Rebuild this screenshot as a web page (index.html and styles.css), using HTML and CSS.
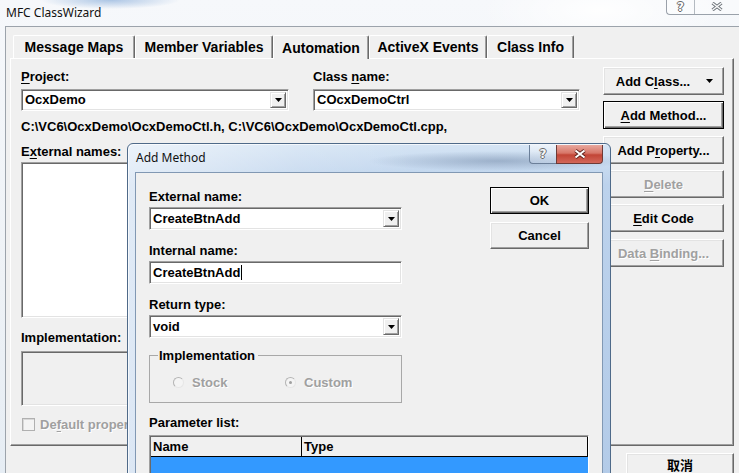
FILE: index.html
```html
<!DOCTYPE html>
<html>
<head>
<meta charset="utf-8">
<title>MFC ClassWizard</title>
<link rel="stylesheet" href="styles.css">
</head>
<body>
<div class="window">
  <div class="titlebar">
    <span class="wtitle">MFC ClassWizard</span>
    <div class="caps">
      <span class="cap help">?</span>
      <span class="cap close">
        <svg width="12" height="9" viewBox="0 0 12 9"><path d="M1.5 1L10.5 8M10.5 1L1.5 8" stroke="#6d737a" stroke-width="3.2" fill="none"/><path d="M1.5 1L10.5 8M10.5 1L1.5 8" stroke="#fafafa" stroke-width="1.4" fill="none"/></svg>
      </span>
    </div>
  </div>

  <div class="client">
    <div class="tabs">
      <div class="tab">Message Maps</div>
      <div class="tab">Member Variables</div>
      <div class="tab sel">Automation</div>
      <div class="tab">ActiveX Events</div>
      <div class="tab">Class Info</div>
    </div>

    <div class="panel">
      <div class="main-left">
        <div class="pair">
          <div class="col proj">
            <div class="lbl"><u>P</u>roject:</div>
            <div class="combo mcombo"><span class="val">OcxDemo</span><span class="drop"><svg width="7" height="4" viewBox="0 0 7 4"><path d="M0 0H7L3.5 4Z"/></svg></span></div>
          </div>
          <div class="col cls">
            <div class="lbl">Class <u>n</u>ame:</div>
            <div class="combo mcombo"><span class="val">COcxDemoCtrl</span><span class="drop"><svg width="7" height="4" viewBox="0 0 7 4"><path d="M0 0H7L3.5 4Z"/></svg></span></div>
          </div>
        </div>
        <div class="lbl path">C:\VC6\OcxDemo\OcxDemoCtl.h, C:\VC6\OcxDemo\OcxDemoCtl.cpp,</div>
        <div class="lbl ext">E<u>x</u>ternal names:</div>
        <div class="listbox"></div>
        <div class="lbl impl">Implementation:</div>
        <div class="implbox"></div>
        <div class="check"><span class="cbox"></span><span class="dtext">De<u>f</u>ault property</span></div>
      </div>

      <div class="rbtns">
        <div class="btn addclass"><span>Add C<u>l</u>ass...</span><svg width="7" height="4" viewBox="0 0 7 4"><path d="M0 0H7L3.5 4Z"/></svg></div>
        <div class="btn def"><span><u>A</u>dd Method...</span></div>
        <div class="btn b3"><span>Add P<u>r</u>operty...</span></div>
        <div class="btn dis"><span><u>D</u>elete</span></div>
        <div class="btn"><span><u>E</u>dit Code</span></div>
        <div class="btn dis b6"><span>Data <u>B</u>inding...</span></div>
      </div>
    </div>

    <div class="bottom">
      <div class="btn cjk">取消</div>
    </div>
  </div>

  <div class="dialog">
    <div class="dlg-title">
      <span class="dtitle">Add Method</span>
      <div class="dcaps">
        <span class="dcap dhelp">?</span>
        <span class="dcap dclose">
          <svg width="14" height="10" viewBox="0 0 14 10"><path d="M2.5 1.5L11.5 8.5M11.5 1.5L2.5 8.5" stroke="#5a1d18" stroke-width="3.6" fill="none"/><path d="M2.5 1.5L11.5 8.5M11.5 1.5L2.5 8.5" stroke="#ffffff" stroke-width="2" fill="none"/></svg>
        </span>
      </div>
    </div>
    <div class="dlg-client">
      <div class="dlg-top">
        <div class="dform">
          <div class="fgroup">
            <div class="lbl">External name:</div>
            <div class="combo dfield"><span class="val">CreateBtnAdd</span><span class="drop"><svg width="7" height="4" viewBox="0 0 7 4"><path d="M0 0H7L3.5 4Z"/></svg></span></div>
          </div>
          <div class="fgroup">
            <div class="lbl">Internal name:</div>
            <div class="combo dfield"><span class="val">CreateBtnAdd<span class="caret"></span></span></div>
          </div>
          <div class="fgroup">
            <div class="lbl">Return type:</div>
            <div class="combo dfield"><span class="val">void</span><span class="drop"><svg width="7" height="4" viewBox="0 0 7 4"><path d="M0 0H7L3.5 4Z"/></svg></span></div>
          </div>
          <div class="gbox">
            <div class="gb-head"><span class="gb-label">Implementation</span></div>
            <div class="gb-body">
              <span class="radio"><span class="rcirc"></span><span class="dtext">Stock</span></span>
              <span class="radio"><span class="rcirc on"></span><span class="dtext">Custom</span></span>
            </div>
          </div>
        </div>
        <div class="dbtns">
          <div class="btn def dbtn"><span>OK</span></div>
          <div class="btn dbtn"><span>Cancel</span></div>
        </div>
      </div>
      <div class="lbl plabel">Parameter list:</div>
      <div class="plist">
        <div class="phead">
          <span class="hc hname">Name</span>
          <span class="hc htype">Type</span>
        </div>
        <div class="psel"></div>
      </div>
    </div>
  </div>
</div>
</body>
</html>
```

FILE: styles.css
```css
* { box-sizing: border-box; }

html, body {
  margin: 0;
  width: 739px;
  height: 473px;
  overflow: hidden;
}

body {
  font-family: "Liberation Sans", Arial, sans-serif;
  font-size: 13px;
  font-weight: 700;
  color: #000;
  background: #eef2f6;
}

u { text-decoration: underline; text-underline-offset: 2px; }

/* ---------- main window ---------- */
.window {
  position: relative;
  width: 739px;
  height: 473px;
  display: flex;
  flex-direction: column;
  background-color: #eef2f6;
  background-image:
    radial-gradient(ellipse 70px 9px at 110px 0, rgba(110, 155, 210, 0.55), rgba(110, 155, 210, 0) 100%),
    radial-gradient(ellipse 120px 40px at 600px 10px, rgba(255, 255, 255, 0.9), rgba(255, 255, 255, 0) 100%),
    linear-gradient(180deg, #f6f8fb 0%, #eef2f6 60%, #e6edf4 100%);
}

.titlebar {
  flex: none;
  height: 26px;
  display: flex;
  justify-content: space-between;
  align-items: flex-start;
}

.wtitle {
  font-family: "Noto Sans", "Open Sans", sans-serif;
  font-weight: 400;
  font-size: 12px;
  line-height: 16px;
  margin: 5px 0 0 6px;
  color: #111;
}

.caps {
  display: flex;
  height: 16px;
  margin-right: -8px;
  margin-top: -1px;
  border-left: 1px solid #9aa1aa;
  border-bottom: 1px solid #9aa1aa;
  border-bottom-left-radius: 4px;
  background: rgba(255, 255, 255, 0.35);
}

.cap {
  display: flex;
  align-items: center;
  justify-content: center;
}

.help {
  width: 28px;
  border-right: 1px solid #b4bac1;
  font-family: "DejaVu Sans", sans-serif;
  font-size: 12px;
  color: #fdfdfd;
  text-shadow: 1px 0 0 #666, -1px 0 0 #666, 0 1px 0 #666, 0 -1px 0 #666;
}

.close { width: 52px; padding-right: 8px; }

.client {
  flex: 1;
  margin-left: 5px;
  border-left: 1px solid #9ca3ab;
  border-top: 1px solid #9ca3ab;
  background: #f0f0f0;
  padding: 8px 5px 0 4px;
  display: flex;
  flex-direction: column;
}

/* tabs */
.tabs {
  display: flex;
  height: 23px;
  padding-left: 3px;
}

.tab {
  height: 23px;
  display: flex;
  align-items: center;
  justify-content: center;
  font-size: 14px;
  background: #f0f0f0;
  border-top: 1px solid #fff;
  border-left: 1px solid #fff;
  border-right: 1px solid #696969;
  border-radius: 2px 2px 0 0;
  box-shadow: inset -1px 0 0 #a0a0a0;
}

.tab:nth-child(1) { width: 122px; }
.tab:nth-child(2) { width: 138px; }
.tab:nth-child(3) { width: 96px; }
.tab:nth-child(4) { width: 118px; }
.tab:nth-child(5) { width: 87px; }

.tab.sel {
  position: relative;
  z-index: 1;
  height: 24px;
  margin-bottom: -1px;
}

/* tab panel */
.panel {
  height: 388px;
  border: 1px solid;
  border-color: #fff #696969 #696969 #fff;
  box-shadow: inset -1px -1px 0 #a0a0a0;
  display: grid;
  grid-template-columns: 1fr 121px;
  column-gap: 23px;
  padding: 10px 9px 0 10px;
  align-items: start;
}

.lbl {
  line-height: 15px;
  height: 15px;
  white-space: nowrap;
}

.pair { display: flex; gap: 24px; }
.proj { width: 268px; }
.cls { flex: 1; }

.combo {
  display: flex;
  height: 22px;
  background: #fff;
  border: 1px solid;
  border-color: #a0a0a0 #fff #fff #a0a0a0;
  box-shadow: inset 1px 1px 0 #696969, inset -1px -1px 0 #e3e3e3;
  padding: 2px;
}

.mcombo { margin-top: 5px; }

.val {
  flex: 1;
  line-height: 16px;
  padding-left: 1px;
  white-space: nowrap;
  display: flex;
  align-items: center;
}

.drop {
  width: 16px;
  background: #f0f0f0;
  border: 1px solid;
  border-color: #e3e3e3 #696969 #696969 #e3e3e3;
  box-shadow: inset 1px 1px 0 #fff, inset -1px -1px 0 #a0a0a0;
  display: flex;
  align-items: center;
  justify-content: center;
}

.path { margin-top: 8px; }
.ext { margin-top: 10px; }

.listbox {
  margin-top: 3px;
  height: 156px;
  background: #fff;
  border: 1px solid;
  border-color: #a0a0a0 #fff #fff #a0a0a0;
  box-shadow: inset 1px 1px 0 #696969, inset -1px -1px 0 #e3e3e3;
}

.impl { margin-top: 12px; }

.implbox {
  margin-top: 6px;
  height: 55px;
  background: #f0f0f0;
  border: 1px solid;
  border-color: #a0a0a0 #fff #fff #a0a0a0;
  box-shadow: inset 1px 1px 0 #696969, inset -1px -1px 0 #e3e3e3;
}

.check {
  margin-top: 11px;
  height: 15px;
  display: flex;
  align-items: center;
  gap: 5px;
  padding-left: 1px;
  white-space: nowrap;
}

.cbox {
  width: 13px;
  height: 13px;
  border: 1px solid #b0b0b0;
  background: #f4f4f4;
  box-shadow: inset 1px 1px 0 #d8d8d8;
}

.dtext {
  color: #a0a0a0;
  text-shadow: 1px 1px 0 #fff;
  line-height: 15px;
}

/* buttons */
.rbtns {
  display: flex;
  flex-direction: column;
  gap: 6px;
  margin-top: -2px;
}

.rbtns .b3, .rbtns .b6 { margin-top: 1px; }

.btn {
  height: 28px;
  background: #f0f0f0;
  border: 1px solid;
  border-color: #fff #696969 #696969 #fff;
  box-shadow: inset -1px -1px 0 #a0a0a0, inset 1px 1px 0 #e3e3e3;
  display: flex;
  align-items: center;
  justify-content: center;
  white-space: nowrap;
  line-height: 15px;
}

.btn.def {
  border-color: #000;
  box-shadow: inset 1px 1px 0 #fff, inset -1px -1px 0 #696969, inset -2px -2px 0 #a0a0a0;
}

.btn.dis {
  color: #a0a0a0;
  text-shadow: 1px 1px 0 #fff;
}

.addclass { gap: 16px; padding-left: 2px; }

.bottom {
  display: flex;
  justify-content: flex-end;
  padding-top: 7px;
}

.cjk {
  width: 108px;
  align-items: flex-start;
  padding-top: 3px;
  font-family: "Noto Sans CJK SC", "Noto Sans CJK TC", sans-serif;
  font-size: 13px;
  line-height: 16px;
  font-weight: 700;
}

/* ---------- Add Method dialog ---------- */
.dialog {
  position: absolute;
  left: 127px;
  top: 143px;
  width: 484px;
  height: 340px;
  border: 1px solid #4f6a89;
  border-radius: 6px 6px 0 0;
  padding: 0 7px;
  display: flex;
  flex-direction: column;
  background-color: #c2d6ee;
  background-image:
    radial-gradient(ellipse 130px 10px at 370px 17px, rgba(70, 95, 130, 0.35), rgba(70, 95, 130, 0) 100%),
    linear-gradient(90deg, rgba(255, 255, 255, 0.55) 0%, rgba(255, 255, 255, 0.15) 35%, rgba(255, 255, 255, 0) 60%),
    linear-gradient(180deg, #d5e4f4 0%, #bcd2ec 12%, #b3cbe8 100%);
  box-shadow: inset 1px 1px 0 rgba(255, 255, 255, 0.7);
}

.dlg-title {
  flex: none;
  height: 28px;
  display: flex;
  justify-content: space-between;
  align-items: flex-start;
}

.dtitle {
  font-family: "Noto Sans", "Open Sans", sans-serif;
  font-weight: 400;
  font-size: 12px;
  line-height: 16px;
  margin: 6px 0 0 1px;
  color: #111;
}

.dcaps {
  display: flex;
  height: 19px;
  margin-top: 1px;
}

.dcap {
  display: flex;
  align-items: center;
  justify-content: center;
}

.dhelp {
  width: 27px;
  border: 1px solid #6b7f99;
  border-right: none;
  border-top: none;
  border-bottom-left-radius: 4px;
  background: linear-gradient(180deg, rgba(255, 255, 255, 0.55), rgba(200, 215, 235, 0.5));
  font-family: "DejaVu Sans", sans-serif;
  font-size: 12px;
  color: #f6f6f6;
  text-shadow: 1px 0 0 #6a6a6a, -1px 0 0 #6a6a6a, 0 1px 0 #6a6a6a, 0 -1px 0 #6a6a6a;
}

.dclose {
  width: 47px;
  border: 1px solid #6e3a36;
  border-top: none;
  border-bottom-right-radius: 4px;
  background: linear-gradient(180deg, #e8a89e 0%, #d77668 45%, #c24536 55%, #d3675a 100%);
}

.dlg-client {
  flex: 1;
  background: #f0f0f0;
  border: 1px solid #8198b3;
  padding: 14px 13px 0;
}

.dlg-top {
  display: flex;
  justify-content: space-between;
}

.dform {
  width: 253px;
  margin-top: 2px;
}

.fgroup + .fgroup { margin-top: 13px; }

.fgroup .lbl { margin-bottom: 3px; }

.dfield { height: 23px; }

.caret {
  display: inline-block;
  width: 1px;
  height: 15px;
  background: #000;
  margin-left: 1px;
}

/* group box */
.gbox { margin-top: 10px; }

.gb-head {
  display: flex;
  height: 15px;
}

.gb-head::before {
  content: "";
  width: 8px;
  margin-top: 7px;
  border-top: 1px solid #a8a8a8;
  border-left: 1px solid #a8a8a8;
}

.gb-head::after {
  content: "";
  flex: 1;
  margin-top: 7px;
  border-top: 1px solid #a8a8a8;
  border-right: 1px solid #a8a8a8;
}

.gb-label {
  line-height: 15px;
  padding: 0 3px 0 1px;
}

.gb-body {
  height: 40px;
  border: 1px solid #a8a8a8;
  border-top: none;
  display: flex;
  align-items: center;
  padding-left: 23px;
}

.radio {
  display: flex;
  align-items: center;
  gap: 8px;
  width: 112px;
}

.rcirc {
  width: 11px;
  height: 11px;
  border-radius: 50%;
  border: 1px solid #b4b4b4;
  border-right-color: #e6e6e6;
  border-bottom-color: #e6e6e6;
  background: #f4f4f4;
  display: flex;
  align-items: center;
  justify-content: center;
}

.rcirc.on::after {
  content: "";
  width: 3px;
  height: 3px;
  border-radius: 50%;
  background: #a0a0a0;
}

.dbtns {
  width: 99px;
  display: flex;
  flex-direction: column;
  gap: 8px;
}

.dbtn { height: 27px; }

.plabel { margin-top: 12px; }

.plist {
  margin-top: 5px;
  height: 80px;
  border: 1px solid;
  border-color: #a0a0a0 #fff #fff #a0a0a0;
  box-shadow: inset 1px 1px 0 #696969;
  padding: 1px 0 0 1px;
  display: flex;
  flex-direction: column;
}

.phead {
  display: flex;
  height: 20px;
  border-bottom: 1px solid #000;
  background: #f0f0f0;
}

.hc {
  display: flex;
  align-items: center;
  padding-left: 2px;
  border-right: 1px solid #000;
  line-height: 15px;
}

.hname { width: 151px; }
.htype { flex: 1; }

.psel {
  flex: 1;
  background: #3399ff;
}
```
